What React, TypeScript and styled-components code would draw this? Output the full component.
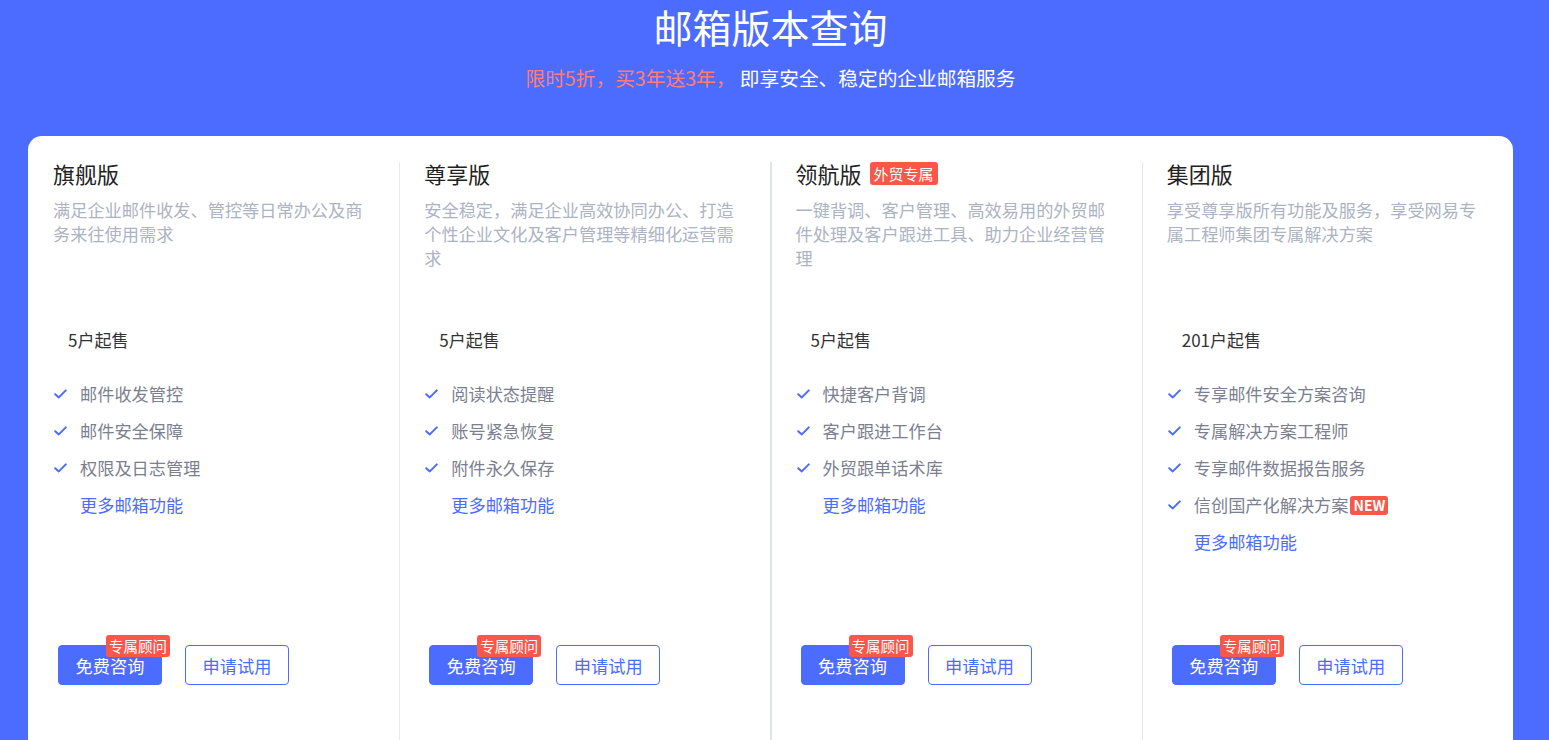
import styled, { createGlobalStyle } from "styled-components";

const GlobalStyle = createGlobalStyle`
  html, body {
    margin: 0;
    padding: 0;
    background: #4c6bff;
    font-family: "Noto Sans CJK SC", "Noto Sans", sans-serif;
    overflow: hidden;
  }
`;

const Page = styled.div`
  padding: 0 36px 0 28px;
  height: 740px;
  overflow: hidden;
`;

const Header = styled.header`
  text-align: center;
  color: #fff;
`;

const Heading = styled.h1`
  margin: 0;
  padding-top: 2px;
  font-size: 39px;
  font-weight: 400;
  line-height: 48px;
`;

const Slogan = styled.p`
  margin: 14px 0 0;
  font-size: 19.7px;
  line-height: 28px;
  white-space: pre;
`;

const Promo = styled.span`
  color: #ff7d72;
`;

const Card = styled.section`
  margin-top: 44px;
  background: #fff;
  border-radius: 14px;
  padding-top: 26px;
  min-height: 640px;
  display: grid;
  grid-template-columns: repeat(4, 1fr);
`;

const Column = styled.div<{ $first?: boolean; $strong?: boolean }>`
  padding: 0 25px 0 ${(p) => (p.$first ? "25px" : "24px")};
  border-left: ${(p) =>
    p.$first ? "none" : p.$strong ? "2px solid #dfe3ec" : "1px solid #e6e8ec"};
  margin-left: ${(p) => (p.$strong ? "-1px" : "0")};
  display: flex;
  flex-direction: column;
`;

const TitleRow = styled.div`
  display: flex;
  align-items: center;
  gap: 8px;
  height: 22px;
`;

const PlanName = styled.h2`
  margin: 0;
  font-size: 22px;
  font-weight: 400;
  line-height: 22px;
  color: #222;
`;

const Tag = styled.span<{ $small?: boolean }>`
  background: #f9574a;
  color: #fff;
  border-radius: 3px;
  font-size: ${(p) => (p.$small ? "14px" : "15px")};
  line-height: ${(p) => (p.$small ? "19px" : "23px")};
  padding: 0 ${(p) => (p.$small ? "3px" : "4px")};
  margin-left: ${(p) => (p.$small ? "2px" : "0")};
  font-weight: ${(p) => (p.$small ? 700 : 400)};
  white-space: nowrap;
`;

const Desc = styled.p`
  margin: 14px 0 0;
  height: 130px;
  width: 18.3em;
  font-size: 17.2px;
  line-height: 24px;
  color: #acb3c3;
`;

const Seats = styled.div`
  padding-left: 15px;
  font-size: 17px;
  line-height: 24px;
  color: #333;
`;

const Features = styled.ul`
  list-style: none;
  margin: 30px 0 0;
  padding: 0;
  height: 263px;
  display: flex;
  flex-direction: column;
  gap: 13px;
`;

const Feature = styled.li`
  display: flex;
  align-items: center;
  font-size: 17.2px;
  line-height: 24px;
  color: #7b8090;
`;

const Check = styled.svg`
  width: 13px;
  height: 10px;
  margin: 0 13px 0 1px;
  flex-shrink: 0;
`;

const MoreLink = styled.a`
  margin-left: 27px;
  font-size: 17.2px;
  line-height: 24px;
  color: #4c6bff;
  text-decoration: none;
`;

const Actions = styled.div`
  display: flex;
  gap: 23px;
  padding-left: 5px;
`;

const Button = styled.button<{ $outline?: boolean }>`
  position: relative;
  width: 104px;
  height: 40px;
  border-radius: 4px;
  font-family: inherit;
  font-size: 17.2px;
  cursor: pointer;
  background: ${(p) => (p.$outline ? "#fff" : "#4c6bff")};
  color: ${(p) => (p.$outline ? "#4c6bff" : "#fff")};
  border: 1px solid #4c6bff;
`;

const Corner = styled.span`
  position: absolute;
  top: -11px;
  left: 47px;
  height: 22px;
  line-height: 22px;
  padding: 0 3px;
  border-radius: 3px;
  background: #f9574a;
  color: #fff;
  font-size: 14.5px;
  white-space: nowrap;
`;

type Plan = {
  name: string;
  tag?: string;
  desc: string;
  seats: string;
  features: { text: string; isNew?: boolean }[];
};

const plans: Plan[] = [
  {
    name: "旗舰版",
    desc: "满足企业邮件收发、管控等日常办公及商务来往使用需求",
    seats: "5户起售",
    features: [{ text: "邮件收发管控" }, { text: "邮件安全保障" }, { text: "权限及日志管理" }],
  },
  {
    name: "尊享版",
    desc: "安全稳定，满足企业高效协同办公、打造个性企业文化及客户管理等精细化运营需求",
    seats: "5户起售",
    features: [{ text: "阅读状态提醒" }, { text: "账号紧急恢复" }, { text: "附件永久保存" }],
  },
  {
    name: "领航版",
    tag: "外贸专属",
    desc: "一键背调、客户管理、高效易用的外贸邮件处理及客户跟进工具、助力企业经营管理",
    seats: "5户起售",
    features: [{ text: "快捷客户背调" }, { text: "客户跟进工作台" }, { text: "外贸跟单话术库" }],
  },
  {
    name: "集团版",
    desc: "享受尊享版所有功能及服务，享受网易专属工程师集团专属解决方案",
    seats: "201户起售",
    features: [
      { text: "专享邮件安全方案咨询" },
      { text: "专属解决方案工程师" },
      { text: "专享邮件数据报告服务" },
      { text: "信创国产化解决方案", isNew: true },
    ],
  },
];

function CheckIcon() {
  return (
    <Check viewBox="0 0 13 10">
      <path d="M1.2 5.2 L4.8 8.4 L11.8 1.4" fill="none" stroke="#4c6bff" strokeWidth="2" strokeLinecap="round" strokeLinejoin="round" />
    </Check>
  );
}

export default function App() {
  return (
    <Page>
      <GlobalStyle />
      <Header>
        <Heading>邮箱版本查询</Heading>
        <Slogan>
          <Promo>限时5折，买3年送3年，</Promo> 即享安全、稳定的企业邮箱服务
        </Slogan>
      </Header>
      <Card>
        {plans.map((plan, i) => (
          <Column key={plan.name} $first={i === 0} $strong={i === 2}>
            <TitleRow>
              <PlanName>{plan.name}</PlanName>
              {plan.tag && <Tag>{plan.tag}</Tag>}
            </TitleRow>
            <Desc>{plan.desc}</Desc>
            <Seats>{plan.seats}</Seats>
            <Features>
              {plan.features.map((f) => (
                <Feature key={f.text}>
                  <CheckIcon />
                  {f.text}
                  {f.isNew && <Tag $small>NEW</Tag>}
                </Feature>
              ))}
              <MoreLink href="#">更多邮箱功能</MoreLink>
            </Features>
            <Actions>
              <Button>
                免费咨询
                <Corner>专属顾问</Corner>
              </Button>
              <Button $outline>申请试用</Button>
            </Actions>
          </Column>
        ))}
      </Card>
    </Page>
  );
}
